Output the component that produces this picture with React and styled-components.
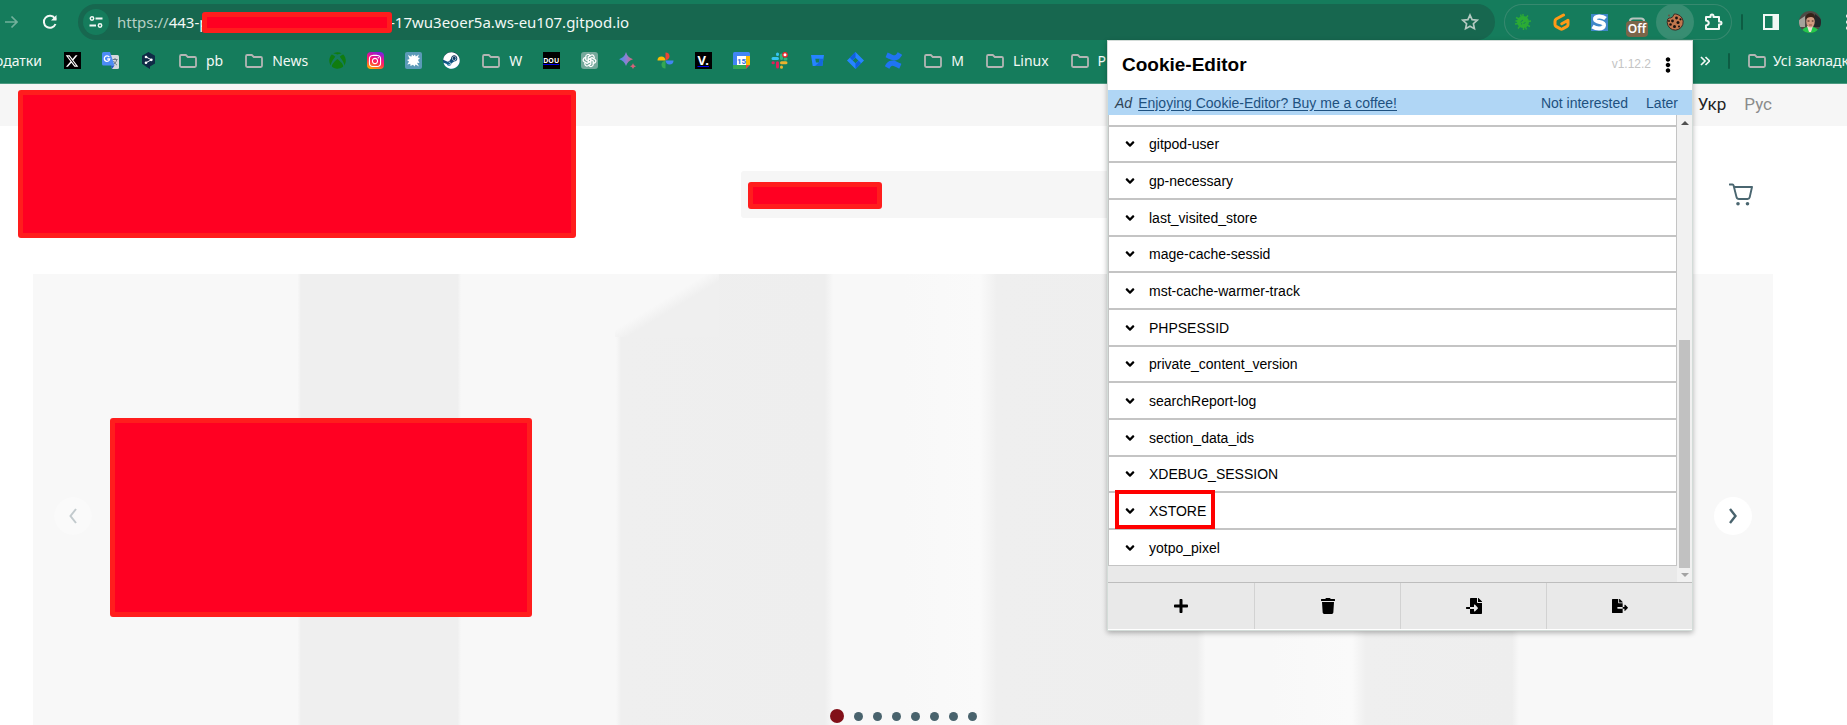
import React from "react";
import styled, { createGlobalStyle, css } from "styled-components";
import {
  FaPlus, FaTrash, FaFileImport, FaFileExport, FaAngleDown, FaEllipsisV,
  FaXbox, FaSteam, FaInstagram, FaBitbucket, FaConfluence,
} from "react-icons/fa";
import { FaXTwitter } from "react-icons/fa6";
import { TbBrandOpenai } from "react-icons/tb";

const GlobalStyle = createGlobalStyle`
  *, *::before, *::after { box-sizing: border-box; }
  body { margin: 0; background: #fff; }
  button { border: 0; padding: 0; background: none; color: inherit; font: inherit; cursor: pointer; }
  svg { display: block; flex: none; }
`;

const App = styled.div`
  position: relative;
  min-height: 100vh;
  display: flex;
  flex-direction: column;
  overflow: hidden;
`;

/* ---------- browser chrome ---------- */
const Chrome = styled.div`
  background: #157c5c;
  color: #f2f8f5;
  font-family: "Noto Sans", sans-serif;
  border-bottom: 1px solid #4a9a80;
`;
const Toolbar = styled.div`
  display: flex;
  align-items: center;
  height: 44px;
  padding-top: 4px;
  padding-bottom: 4px;
`;
const NavButtons = styled.div`
  flex: none;
  width: 78px;
  display: flex;
  align-items: center;
  justify-content: space-between;
  padding: 0 20px 0 4px;
`;
const AddressBar = styled.div`
  flex: 1;
  min-width: 0;
  height: 36px;
  display: flex;
  align-items: center;
  padding: 0 16px 0 5px;
  border-radius: 18px;
  background: #17674f;
`;
const SiteInfo = styled.button`
  flex: none;
  display: grid;
  place-items: center;
  width: 26px;
  height: 26px;
  margin-right: 8px;
  border-radius: 50%;
  background: #157c5c;
`;
const Url = styled.div`
  flex: 1;
  min-width: 0;
  display: flex;
  align-items: center;
  font-size: 15px;
  line-height: 20px;
  white-space: nowrap;
`;
const Scheme = styled.span`
  color: #b4d0c5;
`;
const UrlStart = styled.span`
  overflow: hidden;
  width: 85px;
`;
const UrlEnd = styled.span`
  margin-left: -2px;
`;
const Redaction = styled.div`
  position: relative;
  z-index: 1;
  flex: none;
  width: ${(p) => p.$w}px;
  height: ${(p) => p.$h}px;
  border: 5px solid #ff1d1d;
  border-radius: 3px;
  background: #ff0022;
`;
const Extensions = styled.div`
  flex: none;
  display: flex;
  align-items: center;
  height: 36px;
  margin-left: 9px;
  border-radius: 18px;
  box-shadow: inset 0 0 0 1px #37896f;
`;
const ExtButton = styled.button`
  position: relative;
  display: grid;
  place-items: center;
  width: 38px;
  height: 36px;
  border-radius: 18px;
  background: ${(p) => (p.$active ? "#388d72" : "none")};
`;
const OffBadge = styled.span`
  position: absolute;
  left: 8px;
  top: 17px;
  width: 22px;
  height: 16px;
  border-radius: 4px;
  background: #7b6549;
  color: #fff;
  font-size: 12px;
  font-weight: 600;
  line-height: 15px;
  text-align: center;
`;
const ChromeEnd = styled.div`
  flex: none;
  width: 115px;
  display: flex;
  align-items: center;
  overflow: hidden;
  padding-left: 9px;
`;
const Separator = styled.span`
  flex: none;
  width: 2px;
  height: 16px;
  border-radius: 1px;
  background: #0d5c43;
`;
const SidePanelButton = styled.button`
  margin: 0 20px;
`;
const MenuButton = styled.button`
  margin-left: 25px;
`;

const Bookmarks = styled.div`
  display: flex;
  align-items: center;
  height: 39px;
  padding-bottom: 6px;
  font-size: 14px;
  line-height: 20px;
  white-space: nowrap;
`;
const BookmarkList = styled.div`
  flex: 1;
  min-width: 0;
  display: flex;
  align-items: center;
  overflow: hidden;
`;
const AppsLabel = styled.a`
  flex: none;
  width: 42px;
  display: flex;
  justify-content: flex-end;
  overflow: hidden;
  margin-right: 11px;
  color: inherit;
  text-decoration: none;
`;
const Bookmark = styled.a`
  flex: none;
  display: grid;
  place-items: center;
  width: 38px;
  height: 20px;
`;
const FolderButton = styled.button`
  flex: none;
  display: flex;
  align-items: center;
  gap: 9px;
  margin-left: 12px;
  margin-right: 10px;
`;
const Tile = styled.span`
  display: grid;
  place-items: center;
  width: 17px;
  height: 17px;
  border-radius: ${(p) => p.$r || 0}px;
  background: ${(p) => p.$bg};
  color: #fff;
  font-weight: 700;
  font-size: ${(p) => p.$size || 12}px;
  line-height: 17px;
`;
const BookmarksEnd = styled.div`
  flex: none;
  width: 154px;
  display: flex;
  align-items: center;
  overflow: hidden;
  padding-left: 7px;
`;
const MoreButton = styled.button`
  margin-right: 18px;
`;
const AllBookmarks = styled.button`
  display: flex;
  align-items: center;
  gap: 7px;
  margin-left: 18px;
`;

/* ---------- shop page ---------- */
const Page = styled.main`
  position: relative;
  flex: 1;
  display: flex;
  flex-direction: column;
`;
const LanguageBar = styled.nav`
  display: flex;
  justify-content: flex-end;
  gap: 18px;
  padding: 8px 75px 10px 33px;
  background: #f6f6f6;
  font: 17px/24px Roboto, sans-serif;
`;
const Language = styled.a`
  color: ${(p) => (p.$current ? "#222" : "#8b8b8b")};
  text-decoration: none;
`;
const ShopHeader = styled.header`
  display: flex;
  align-items: center;
  padding: 45px 94px 56px 33px;
  height: 148px;
`;
const LogoSlot = styled.div`
  flex: 0 1 708px;
`;
const LogoCover = styled.div`
  position: absolute;
  left: 18px;
  top: 6px;
`;
const SearchBox = styled.form`
  flex: 1;
  display: flex;
  align-items: center;
  height: 47px;
  margin-right: 200px;
  padding: 2px 7px 0;
  border-radius: 3px;
  background: #f6f6f6;
`;
const SearchInput = styled.input`
  flex: 1;
  min-width: 0;
  border: 0;
  outline: 0;
  background: transparent;
`;
const Hero = styled.section`
  flex: 1;
  margin: 0 74px 0 33px;
  padding: 144px 21px 0;
  background:
    linear-gradient(to bottom right, #f8f8f8 44%, #efefef 56%) 35.6% 0 / 104px 63px no-repeat,
    linear-gradient(to right,
      #f8f8f8 15.2%, #efefef 15.4%, #efefef 24.4%, #f8f8f8 24.6%,
      #f8f8f8 33.5%, #efefef 33.8%, #eeeeee 45.5%, #f8f8f8 46%,
      #f8f8f8 50%, #fafafa 54.4%, #efefef 55.4%, #eeeeee 66.9%,
      #f8f8f8 67.4%, #f8f8f8 71%, #fafafa 75.8%, #efefef 76.6%,
      #eeeeee 85%, #f8f8f8 85.4%);
`;
const Slide = styled.div`
  display: flex;
  align-items: center;
  gap: 18px;
`;
const SlideArrow = styled.button`
  flex: none;
  display: grid;
  place-items: center;
  width: 38px;
  height: 38px;
  margin-bottom: 4px;
  border-radius: 50%;
  background: #fff;
  opacity: ${(p) => (p.$dim ? 0.3 : 1)};
  ${(p) => p.$end && css`margin-left: auto;`}
`;
const Dots = styled.div`
  display: flex;
  align-items: center;
  justify-content: center;
  gap: 10px;
  margin-top: 92px;
  height: 14px;
`;
const Dot = styled.button`
  width: ${(p) => (p.$current ? 14 : 9)}px;
  height: ${(p) => (p.$current ? 14 : 9)}px;
  border-radius: 50%;
  background: ${(p) => (p.$current ? "#821019" : "#49636d")};
`;

/* ---------- extension popup ---------- */
const Popup = styled.aside`
  position: absolute;
  z-index: 2;
  top: 40px;
  right: 154px;
  width: 586px;
  border: 1px solid #d3dcd8;
  background: #fff;
  box-shadow: 0 2px 5px rgba(0, 0, 0, 0.28);
  color: #000;
  font: 14px/18px "Liberation Sans", Arial, sans-serif;
`;
const PopupHeader = styled.header`
  display: flex;
  align-items: center;
  height: 49px;
  padding: 0 16px 2px 14px;
`;
const PopupTitle = styled.h1`
  flex: 1;
  margin: 0;
  font-size: 19px;
  line-height: 24px;
`;
const Version = styled.span`
  margin-right: 9px;
  padding-bottom: 2px;
  color: #c4c4c4;
  font-size: 12px;
`;
const AdBar = styled.div`
  display: flex;
  align-items: center;
  height: 25px;
  padding: 0 14px 0 7px;
  background: #b0d6f5;
  color: #1e5180;
`;
const AdTag = styled.i`
  margin-right: 6px;
  color: #2f4354;
`;
const AdLink = styled.a`
  margin-right: auto;
  color: #1e5180;
  text-underline-offset: 2px;
`;
const AdAction = styled.button`
  margin-left: 18px;
`;
const ListArea = styled.div`
  display: flex;
  background: #e9e9e9;
`;
const CookieList = styled.ul`
  flex: 1;
  margin: 0;
  padding: 0 0 16px;
  list-style: none;
`;
const CookieStub = styled.li`
  height: 11px;
  border: solid #c4c4c4;
  border-width: 0 1px 1px;
  background: #fff;
`;
const CookieRow = styled.li`
  position: relative;
  height: 37px;
  border: 1px solid #c4c4c4;
  background: #fff;
  &:nth-child(3n + 2) {
    height: 36px;
  }
`;
const CookieToggle = styled.button`
  display: flex;
  align-items: center;
  gap: 12px;
  width: 100%;
  height: 100%;
  padding-left: 14px;
`;
const Highlight = styled.span`
  position: absolute;
  left: 6px;
  top: -3px;
  width: 100px;
  height: 39px;
  border: 4px solid #f00;
  pointer-events: none;
`;
const Scrollbar = styled.div`
  flex: none;
  width: 15px;
  display: flex;
  flex-direction: column;
  align-items: center;
  justify-content: space-between;
  padding: 5px 0 4px;
  background: #f1f1f1;
`;
const Thumb = styled.div`
  width: 11px;
  height: 228px;
  margin-top: auto;
  margin-bottom: 5px;
  background: #c1c1c1;
`;
const PopupFooter = styled.footer`
  display: grid;
  grid-template-columns: repeat(4, 1fr);
  height: 48px;
  border-top: 1px solid #bdbdbd;
  border-bottom: 1px solid #fff;
  background: #e9e9e9;
`;
const FooterButton = styled.button`
  display: grid;
  place-items: center;
  & + & {
    border-left: 1px solid #d2d2d2;
  }
`;

/* ---------- drawings ---------- */
const Svg = ({ w = 17, h = w, box = "0 0 17 17", children }) => (
  <svg width={w} height={h} viewBox={box} fill="none" aria-hidden="true">{children}</svg>
);
const FolderIcon = () => (
  <Svg w={18} h={14} box="0 0 18 14">
    <path d="M1 2.2Q1 1 2.2 1H6.8L8.8 3H15.8Q17 3 17 4.2V11.8Q17 13 15.8 13H2.2Q1 13 1 11.8Z" stroke="#b3b5b4" strokeWidth="1.8" />
  </Svg>
);
const TranslateIcon = () => (
  <Svg>
    <path d="M7 3H15.5Q17 3 17 4.500V15.500Q17 17 15.500 17H10Z" fill="#d5d8dc" />
    <path d="M10.500 7.500H15.500M13 6V7.500M14.800 7.500C14.300 10 12.500 12 11 13M11.500 9C12.500 11 14 12.500 15 13" stroke="#667785" />
    <path d="M1.500 0H8L12.500 13.500H1.500Q0 13.500 0 12V1.500Q0 0 1.500 0Z" fill="#4c8bf5" />
    <path d="M10 17L12.500 13.500H8.800Z" fill="#2456c4" />
    <path d="M7.300 5.200A2.700 2.700 0 1 0 7.700 7H5.200" stroke="#fff" strokeWidth="1.300" />
  </Svg>
);
const DeeplIcon = () => (
  <Svg>
    <path d="M8.500 0L15 3.800V11.500L10 14.400V17L7 15.200L2 11.800V3.800Z" fill="#0f2b46" />
    <path d="M5.800 4.800L11.300 7.800L5.800 10.800" stroke="#fff" />
    <circle cx="6" cy="5" r="1.300" fill="#fff" /><circle cx="11.300" cy="7.800" r="1.400" fill="#fff" /><circle cx="6" cy="10.800" r="1.300" fill="#fff" />
  </Svg>
);
const BurstIcon = () => (
  <Svg>
    <rect width="17" height="17" rx="2" fill="#5b9ab8" />
    <path d="M8.500 4L10 2.500L10.800 4.500L14 2.500L12.800 5.500L15 6L13 8L14.500 11L12 10.800L14 14.500L10.500 12.500L9.500 14.500L8 12.700L5.500 14L5.300 11.800L2.300 12.500L4 9.500L2 8L4.500 7L3 3L6.300 4.800L7 2.500Z" fill="#fff" />
  </Svg>
);
const SparkleIcon = () => (
  <Svg>
    <defs><linearGradient id="sparkle" x1="0" x2="1"><stop stopColor="#3f8ff0" /><stop offset=".55" stopColor="#9080d0" /><stop offset="1" stopColor="#dc6470" /></linearGradient></defs>
    <path d="M7 0Q8.500 5.500 14 7.200Q8.500 9 7 14Q5.500 9 0 7.200Q5.500 5.500 7 0Z" fill="url(#sparkle)" />
    <path d="M14 11.200Q14.500 13.500 17 14.200Q14.500 14.900 14 17Q13.500 14.900 11 14.200Q13.500 13.500 14 11.200Z" fill="#d8627a" />
  </Svg>
);
const PhotosIcon = () => (
  <Svg>
    <path d="M8.500 8.500V.500A4 4 0 0 1 12.500 4.500Q12.500 7 8.500 8.500Z" fill="#ea4335" />
    <path d="M8.500 8.500H.500A4 4 0 0 1 4.500 4.500Q8 4.500 8.500 8.500Z" fill="#fbbc04" />
    <path d="M8.500 8.500V16.500A4 4 0 0 1 4.500 12.500Q4.500 9.500 8.500 8.500Z" fill="#34a853" />
    <path d="M8.500 8.500H16.500A4 4 0 0 1 12.500 12.500Q9 12.500 8.500 8.500Z" fill="#4285f4" />
  </Svg>
);
const CalendarIcon = () => (
  <Svg>
    <rect width="17" height="17" rx="1.500" fill="#4285f4" />
    <path d="M13 4H17V13H13Z" fill="#fbbc04" /><path d="M0 13H13V17H1.500Q0 17 0 15.500Z" fill="#34a853" />
    <path d="M13 13H17L13 17Z" fill="#ea4335" /><path d="M17 13V17H13Z" fill="#157c5c" />
    <rect x="4" y="4" width="9" height="9" fill="#fff" />
    <text x="8.500" y="11.500" fontSize="8" fontWeight="700" fill="#2a6ee0" textAnchor="middle" fontFamily="Roboto, sans-serif">15</text>
  </Svg>
);
const SlackIcon = () => (
  <Svg>
    <g strokeWidth="3" strokeLinecap="round">
      <path d="M6.500 2V2.500M2 6.500H6.500" stroke="#36c5f0" />
      <path d="M10.500 3V6.500M14 7H15" stroke="#2eb67d" />
      <path d="M10.500 10.800H15M10.500 15V15.200" stroke="#ecb22e" />
      <path d="M6.500 10.800V15M2 10.800H2.300" stroke="#e01e5a" />
    </g>
    <circle cx="14" cy="2.800" r="2.200" fill="#fff" stroke="#e5282d" strokeWidth="1.400" />
  </Svg>
);
const BitbucketIcon = () => (
  <Svg>
    <path d="M2 3H15L13.300 14H3.700Z" fill="#2684ff" />
    <path d="M6.300 6.700H10.700L10 10.600H7Z" fill="#157c5c" />
    <path d="M10.700 6.700H14.400L13.300 14H6L10 10.600Z" fill="#1468dc" />
  </Svg>
);
const JiraIcon = () => (
  <Svg>
    <path d="M8.500 0L17 8.500L8.500 17L0 8.500Z" fill="#2684ff" />
    <path d="M8.500 0V5.500L5.500 8.500L2.800 5.700Z" fill="#0f60db" /><path d="M8.500 17V11.500L11.500 8.500L14.200 11.300Z" fill="#0f60db" />
    <path d="M8.500 5.700L11.300 8.500L8.500 11.300L5.700 8.500Z" fill="#157c5c" />
  </Svg>
);
const VirusIcon = () => (
  <Svg w={18} box="0 0 18 18">
    <circle cx="9" cy="9" r="6" fill="#2bab35" />
    <path d="M9 1V4M14 2.500L12 5M17 8L14 8.500M16 13.500L13 12M9.500 17V14M4 15.500L6 13M1 11L4 10.500M2 4.500L5 6M6.500 1.500L7.500 4M12.500 16.500L11.500 14M1.500 8H4" stroke="#2bab35" strokeWidth="1.400" />
    <path d="M6.500 9L9 7M9.500 11L11.500 9M7 11.200L8 10.500" stroke="#157c5c" />
  </Svg>
);
const GitpodIcon = () => (
  <Svg w={17} h={18} box="0 0 17 18">
    <path d="M10.500 2L3.200 6Q2 6.800 2 8.200V11.600Q2 12.800 3 13.400L7.500 15.900Q8.500 16.400 9.500 15.900L14 13.400Q15 12.800 15 11.600V7.300L8.800 10.700" stroke="#ff9a16" strokeWidth="3" strokeLinecap="round" strokeLinejoin="round" />
  </Svg>
);
const StylusIcon = () => (
  <Svg>
    <rect width="17" height="17" fill="#3f88c9" />
    <path d="M14.500 4.500Q12 2.300 8 2.500Q3.500 2.800 4 5.500Q4.300 7.300 8.500 8Q13.300 8.800 13 11.500Q12.500 14.500 8 14.500Q4.500 14.500 1.500 12.500" stroke="#fff" strokeWidth="4" />
  </Svg>
);
const CookieIcon = () => (
  <Svg w={18} box="0 0 18 18">
    <path d="M8 1.200Q7.500 4 4.800 5Q3 4.600 1.800 6A8 8 0 1 0 11 1.300Q9.500.800 8 1.200Z" fill="#c0764d" stroke="#3b2b25" />
    <g fill="#17110f"><circle cx="10.500" cy="5" r="1.400" /><circle cx="6.500" cy="8" r="1.400" /><circle cx="12" cy="9.500" r="1.500" /><circle cx="4.500" cy="11.500" r="1.300" /><circle cx="8.500" cy="13.500" r="1.500" /><circle cx="13" cy="13.500" r="1" /><circle cx="14.500" cy="6.300" r="1.100" /><circle cx="3" cy="8" r=".900" /></g>
    <circle cx="3" cy="2.500" r=".900" fill="#6c5140" />
  </Svg>
);
const PuzzleIcon = () => (
  <Svg w={20} h={18} box="0 0 20 18">
    <path d="M3 4H7.500V3A1.500 1.500 0 0 1 10.500 3V4H16V8.500H17A1.500 1.500 0 0 1 17 11.500H16V16H3V12.500Q5.800 12 5.800 10Q5.800 8 3 7.500Z" stroke="#f2f8f5" strokeWidth="2" strokeLinejoin="round" />
  </Svg>
);
const Avatar = () => (
  <Svg w={22} box="0 0 22 22">
    <defs><clipPath id="face"><circle cx="11" cy="11" r="11" /></clipPath></defs>
    <g clipPath="url(#face)">
      <rect width="22" height="22" fill="#4e4a45" /><path d="M0 9L6 5V16H0Z" fill="#a4a39b" /><path d="M16 3L22 8V16H15Z" fill="#24262a" />
      <path d="M2 22Q3 17 8 16H14Q19 17 21 22Z" fill="#22c84c" /><path d="M8 15H14L12 21H10Z" fill="#e8ded2" />
      <ellipse cx="11.500" cy="10.500" rx="4.200" ry="6" fill="#d29b80" /><path d="M6.500 9Q6 2 12 2Q17 3 16 9Q15 6 12 6Q8 6 6.500 9Z" fill="#352117" />
      <path d="M8.500 10H10.500M12.800 10H14.500" stroke="#3a211a" /><path d="M10 14H13" stroke="#944f43" />
    </g>
  </Svg>
);
const CartIcon = () => (
  <Svg w={24} h={23} box="0 0 24 23">
    <path d="M.500 1.500H3.500Q4.300 1.500 4.600 2.500L7.500 14Q8 16 10 16H18.500Q20.300 16 20.700 14.300L23 4H5" stroke="#4a6670" strokeWidth="1.900" strokeLinecap="round" strokeLinejoin="round" />
    <circle cx="9" cy="20.800" r="1.800" fill="#4a6670" /><circle cx="18.500" cy="20.800" r="1.800" fill="#4a6670" />
  </Svg>
);

const Folder = ({ name }) => <FolderButton><FolderIcon />{name}</FolderButton>;
const Site = ({ label, children }) => <Bookmark href="#" aria-label={label}>{children}</Bookmark>;

const cookies = [
  "gitpod-user", "gp-necessary", "last_visited_store", "mage-cache-sessid",
  "mst-cache-warmer-track", "PHPSESSID", "private_content_version", "searchReport-log",
  "section_data_ids", "XDEBUG_SESSION", "XSTORE", "yotpo_pixel",
];

const BrowserChrome = () => (
  <Chrome>
    <Toolbar>
      <NavButtons>
        <button aria-label="Forward">
          <Svg w={14} box="0 0 14 14"><path d="M1 7H12.500M7.500 1.500L13 7L7.500 12.500" stroke="#72b09b" strokeWidth="1.700" /></Svg>
        </button>
        <button aria-label="Reload">
          <Svg w={16} box="0 0 16 16"><path d="M13.500 10A6 6 0 1 1 12.800 4.300L14 5.700" stroke="#f2f8f5" strokeWidth="2" /><path d="M14.500 1V6.500H9Z" fill="#f2f8f5" /></Svg>
        </button>
      </NavButtons>
      <AddressBar>
        <SiteInfo aria-label="Site information">
          <Svg w={14} h={12} box="0 0 14 12"><path d="M6.500 2.500H13.500M.500 9.500H7" stroke="#f2f8f5" strokeWidth="1.800" /><circle cx="3" cy="2.500" r="1.700" stroke="#f2f8f5" strokeWidth="1.500" /><circle cx="11" cy="9.500" r="1.700" stroke="#f2f8f5" strokeWidth="1.500" /></Svg>
        </SiteInfo>
        <Url>
          <UrlStart><Scheme>https://</Scheme>443-p</UrlStart>
          <Redaction $w={190} $h={21} />
          <UrlEnd>-17wu3eoer5a.ws-eu107.gitpod.io</UrlEnd>
        </Url>
        <button aria-label="Bookmark this tab">
          <Svg w={18} box="0 0 18 18"><path d="M9 2L11.100 6.600L16.200 7.200L12.400 10.700L13.400 15.700L9 13.200L4.600 15.700L5.600 10.700L1.800 7.200L6.900 6.600Z" stroke="#b4c9c1" strokeWidth="1.700" /></Svg>
        </button>
      </AddressBar>
      <Extensions>
        <ExtButton aria-label="Bug tracker"><VirusIcon /></ExtButton>
        <ExtButton aria-label="Gitpod"><GitpodIcon /></ExtButton>
        <ExtButton aria-label="Stylus"><StylusIcon /></ExtButton>
        <ExtButton aria-label="Proxy"><Svg w={18} box="0 0 18 18"><path d="M2 8Q2 5.500 5 5.500H13Q16 5.500 16 8" stroke="#b9c4bf" strokeWidth="2" /></Svg><OffBadge>Off</OffBadge></ExtButton>
        <ExtButton aria-label="Cookie-Editor" $active><CookieIcon /></ExtButton>
        <ExtButton aria-label="Extensions"><PuzzleIcon /></ExtButton>
      </Extensions>
      <ChromeEnd>
        <Separator />
        <SidePanelButton aria-label="Side panel">
          <Svg w={16} box="0 0 16 16"><path d="M1 1H15V15H1Z" stroke="#f2f8f5" strokeWidth="2" /><path d="M9.500 1H15V15H9.500Z" fill="#f2f8f5" /></Svg>
        </SidePanelButton>
        <button aria-label="Profile"><Avatar /></button>
        <MenuButton aria-label="Menu">
          <Svg w={4} h={16} box="0 0 4 16"><g fill="#f2f8f5"><circle cx="2" cy="2" r="2" /><circle cx="2" cy="8" r="2" /><circle cx="2" cy="14" r="2" /></g></Svg>
        </MenuButton>
      </ChromeEnd>
    </Toolbar>
    <Bookmarks>
      <BookmarkList>
        <AppsLabel href="#">Додатки</AppsLabel>
        <Site label="X"><Tile $bg="#000"><FaXTwitter size={14} /></Tile></Site>
        <Site label="Translate"><TranslateIcon /></Site>
        <Site label="DeepL"><DeeplIcon /></Site>
        <Folder name="pb" />
        <Folder name="News" />
        <Site label="Xbox"><FaXbox size={17} color="#107c10" /></Site>
        <Site label="Instagram"><Tile $r={4} $bg="linear-gradient(200deg, #7024e8 5%, #f0108a 40%, #ff3050 60%, #ffb000 95%)"><FaInstagram size={14} /></Tile></Site>
        <Site label="Burst"><BurstIcon /></Site>
        <Site label="Steam"><Tile $r={9} $bg="linear-gradient(#0b1738, #1580b8)"><FaSteam size={17} /></Tile></Site>
        <Folder name="W" />
        <Site label="DOU"><Tile $bg="#000" $size={7}>DOU</Tile></Site>
        <Site label="ChatGPT"><Tile $r={3} $bg="#75a99c"><TbBrandOpenai size={15} /></Tile></Site>
        <Site label="Gemini"><SparkleIcon /></Site>
        <Site label="Photos"><PhotosIcon /></Site>
        <Site label="V."><Tile $bg="#000" $size={13}>V.</Tile></Site>
        <Site label="Calendar"><CalendarIcon /></Site>
        <Site label="Slack"><SlackIcon /></Site>
        <Site label="Bitbucket"><BitbucketIcon /></Site>
        <Site label="Jira"><JiraIcon /></Site>
        <Site label="Confluence"><FaConfluence size={17} color="#1f74f2" /></Site>
        <Folder name="M" />
        <Folder name="Linux" />
        <Folder name="P" />
      </BookmarkList>
      <BookmarksEnd>
        <MoreButton aria-label="More bookmarks">
          <Svg w={10} box="0 0 10 10"><path d="M1 1L5 5L1 9M5.500 1L9.500 5L5.500 9" stroke="#f2f8f5" strokeWidth="1.700" /></Svg>
        </MoreButton>
        <Separator />
        <AllBookmarks><FolderIcon />Усі закладки</AllBookmarks>
      </BookmarksEnd>
    </Bookmarks>
  </Chrome>
);

const Shop = () => (
  <Page>
    <LanguageBar>
      <Language href="#" $current>Укр</Language>
      <Language href="#">Рус</Language>
    </LanguageBar>
    <ShopHeader>
      <LogoSlot />
      <SearchBox>
        <Redaction $w={134} $h={27} />
        <SearchInput type="search" aria-label="Search" />
      </SearchBox>
      <button aria-label="Cart"><CartIcon /></button>
    </ShopHeader>
    <LogoCover><Redaction $w={558} $h={148} /></LogoCover>
    <Hero>
      <Slide>
        <SlideArrow $dim aria-label="Previous slide">
          <Svg w={8} h={16} box="0 0 8 16"><path d="M7 1L1.500 8L7 15" stroke="#49636d" strokeWidth="2" /></Svg>
        </SlideArrow>
        <Redaction $w={422} $h={199} />
        <SlideArrow $end aria-label="Next slide">
          <Svg w={8} h={16} box="0 0 8 16"><path d="M1 1L6.500 8L1 15" stroke="#49636d" strokeWidth="2.400" /></Svg>
        </SlideArrow>
      </Slide>
      <Dots>
        {Array.from({ length: 8 }, (_, i) => <Dot key={i} $current={i === 0} aria-label={`Slide ${i + 1}`} />)}
      </Dots>
    </Hero>
  </Page>
);

const CookieEditor = () => (
  <Popup>
    <PopupHeader>
      <PopupTitle>Cookie-Editor</PopupTitle>
      <Version>v1.12.2</Version>
      <button aria-label="Options"><FaEllipsisV size={16} /></button>
    </PopupHeader>
    <AdBar>
      <AdTag>Ad</AdTag>
      <AdLink href="#">Enjoying Cookie-Editor? Buy me a coffee!</AdLink>
      <AdAction>Not interested</AdAction>
      <AdAction>Later</AdAction>
    </AdBar>
    <ListArea>
      <CookieList>
        <CookieStub />
        {cookies.map((name) => (
          <CookieRow key={name}>
            <CookieToggle><FaAngleDown size={14} />{name}</CookieToggle>
            {name === "XSTORE" && <Highlight />}
          </CookieRow>
        ))}
      </CookieList>
      <Scrollbar>
        <Svg w={8} h={5} box="0 0 8 5"><path d="M0 5L4 1L8 5Z" fill="#505050" /></Svg>
        <Thumb />
        <Svg w={8} h={5} box="0 0 8 5"><path d="M0 0L4 4L8 0Z" fill="#a3a3a3" /></Svg>
      </Scrollbar>
    </ListArea>
    <PopupFooter>
      <FooterButton aria-label="Add"><FaPlus size={16} /></FooterButton>
      <FooterButton aria-label="Delete all"><FaTrash size={16} /></FooterButton>
      <FooterButton aria-label="Import"><FaFileImport size={16} /></FooterButton>
      <FooterButton aria-label="Export"><FaFileExport size={16} /></FooterButton>
    </PopupFooter>
  </Popup>
);

export default function Screen() {
  return (
    <App>
      <GlobalStyle />
      <BrowserChrome />
      <Shop />
      <CookieEditor />
    </App>
  );
}
